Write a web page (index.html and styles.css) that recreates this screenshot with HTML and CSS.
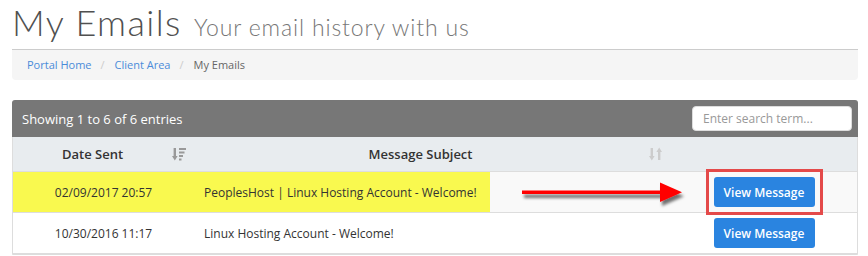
FILE: index.html
```html
<!DOCTYPE html>
<html lang="en">
<head>
  <meta charset="UTF-8">
  <title>My Emails</title>
  <link rel="stylesheet" href="styles.css">
</head>
<body>
  <div class="page">
    <div class="page-header">
      <h1>My Emails <small>Your email history with us</small></h1>
    </div>
    <ol class="breadcrumb">
      <li><a href="#">Portal Home</a></li>
      <li><a href="#">Client Area</a></li>
      <li class="active">My Emails</li>
    </ol>

    <div class="panel">
      <div class="panel-top">
        <span class="info">Showing 1 to 6 of 6 entries</span>
        <input class="search" type="text" placeholder="Enter search term...">
      </div>
      <table class="emails">
        <colgroup>
          <col class="col-date">
          <col class="col-subject">
          <col class="col-action">
        </colgroup>
        <thead>
          <tr>
            <th class="sorted">
              <svg class="sort-icon" viewBox="0 0 14 14" width="14" height="14">
                <rect x="1.6" y="1" width="2.4" height="8.5"/>
                <polygon points="0,9 5.6,9 2.8,13.5"/>
                <rect x="7" y="1" width="7" height="2"/>
                <rect x="7" y="4.5" width="5.5" height="2"/>
                <rect x="7" y="8" width="4" height="2"/>
                <rect x="7" y="11.5" width="2.5" height="2"/>
              </svg>
              Date Sent
            </th>
            <th>
              <svg class="sort-icon light" viewBox="0 0 14 14" width="14" height="14">
                <rect x="1.6" y="1" width="2.4" height="8.5"/>
                <polygon points="0,9 5.6,9 2.8,13.5"/>
                <polygon points="7.4,5 13,5 10.2,0.5"/>
                <rect x="9" y="4.5" width="2.4" height="8.5"/>
              </svg>
              Message Subject
            </th>
            <th></th>
          </tr>
        </thead>
        <tbody>
          <tr class="striped">
            <td class="date marked">02/09/2017 20:57</td>
            <td class="subject marked-part">PeoplesHost | Linux Hosting Account - Welcome!</td>
            <td class="action"><span class="callout"><button class="btn">View Message</button></span></td>
          </tr>
          <tr>
            <td class="date">10/30/2016 11:17</td>
            <td class="subject">Linux Hosting Account - Welcome!</td>
            <td class="action"><button class="btn">View Message</button></td>
          </tr>
        </tbody>
      </table>

      <!-- annotation arrow pointing at the button -->
      <svg class="annot-arrow" width="190" height="40" viewBox="0 0 190 40">
        <defs>
          <filter id="shadow" x="-10%" y="-50%" width="130%" height="250%">
            <feDropShadow dx="2" dy="4" stdDeviation="1.6" flood-color="#000" flood-opacity="0.55"/>
          </filter>
        </defs>
        <g filter="url(#shadow)" fill="#f00">
          <rect x="9" y="14.5" width="141" height="3.5"/>
          <polygon points="147,6.5 169,16.3 147,26"/>
        </g>
      </svg>
    </div>
  </div>
</body>
</html>
```

FILE: styles.css
```css
html, body {
  margin: 0;
  padding: 0;
  background: #fff;
  font-family: "Open Sans", Arial, sans-serif;
  color: #333;
}
.page {
  padding: 0 10px 0 12px;
}
.page-header {
  padding-bottom: 5px;
}
.page-header h1 {
  margin: 0;
  font-family: Lato, "Open Sans", Arial, sans-serif;
  font-weight: 300;
  font-size: 36px;
  line-height: normal;
  color: #505050;
  letter-spacing: 1.4px;
}
.page-header small {
  font-size: 23px;
  color: #777;
  font-weight: 300;
  letter-spacing: 0.85px;
  margin-left: 1px;
}
.breadcrumb {
  list-style: none;
  margin: 0;
  padding: 7px 15px;
  background: #f5f5f5;
  border-top: 1px solid #ccc;
  border-radius: 0 0 4px 4px;
  font-size: 11px;
  line-height: 16px;
  display: flex;
}
.breadcrumb li + li::before {
  content: "/";
  color: #ccc;
  padding: 0 10px 0 9px;
}
.breadcrumb a {
  color: #4a8bd9;
  text-decoration: none;
}
.breadcrumb .active {
  color: #666;
}
.panel {
  position: relative;
  margin-top: 20px;
  border: 1px solid #ddd;
  border-radius: 4px 4px 0 0;
}
.panel-top {
  background: #777;
  border-radius: 3px 3px 0 0;
  margin: -1px -1px 0;
  padding: 6px 6px 6px 10px;
  display: flex;
  justify-content: space-between;
  align-items: center;
}
.info {
  color: #fff;
  font-size: 13px;
}
.search {
  width: 160px;
  height: 25px;
  box-sizing: border-box;
  border: 1px solid #ddd;
  border-radius: 4px;
  padding: 0 10px;
  font-family: "Open Sans", Arial, sans-serif;
  font-size: 12px;
  color: #555;
}
.search::placeholder {
  color: #999;
}
.emails {
  width: 100%;
  border-collapse: collapse;
  font-size: 12px;
}
.col-date { width: 181px; }
.col-subject { width: 477px; }
.emails th {
  background: #e8ecef;
  font-weight: 600;
  font-size: 13px;
  color: #333;
  text-align: center;
  height: 34px;
  padding: 0 8px;
  border-bottom: 1px solid #ddd;
}
.sort-icon {
  float: right;
  fill: #999;
  margin: 2px 0 0 8px;
}
.sort-icon.light {
  fill: #ccc;
  margin-left: 10px;
}
.emails td {
  padding: 5px 10px;
  border-top: 1px solid #ddd;
  height: 30px;
}
.emails tbody tr:last-child td {
  border-bottom: 1px solid #ddd;
}
.striped td {
  background: #f9f9f9;
}
.date {
  text-align: center;
}
.emails td.marked {
  background: #f9f94f;
}
.emails td.marked-part {
  background: linear-gradient(to right, #f9f94f 296px, #f9f9f9 296px);
}
.action {
  text-align: center;
}
.btn {
  background: #2a84e0;
  color: #fff;
  border: none;
  border-radius: 3px;
  font-family: "Open Sans", Arial, sans-serif;
  font-size: 12px;
  font-weight: 600;
  width: 101px;
  height: 30px;
  padding: 0;
  vertical-align: middle;
  cursor: pointer;
}
.callout {
  display: inline-flex;
  vertical-align: middle;
  outline: 3px solid #e44a4a;
  outline-offset: 5px;
}
.annot-arrow {
  position: absolute;
  left: 500px;
  top: 75px;
}
```
